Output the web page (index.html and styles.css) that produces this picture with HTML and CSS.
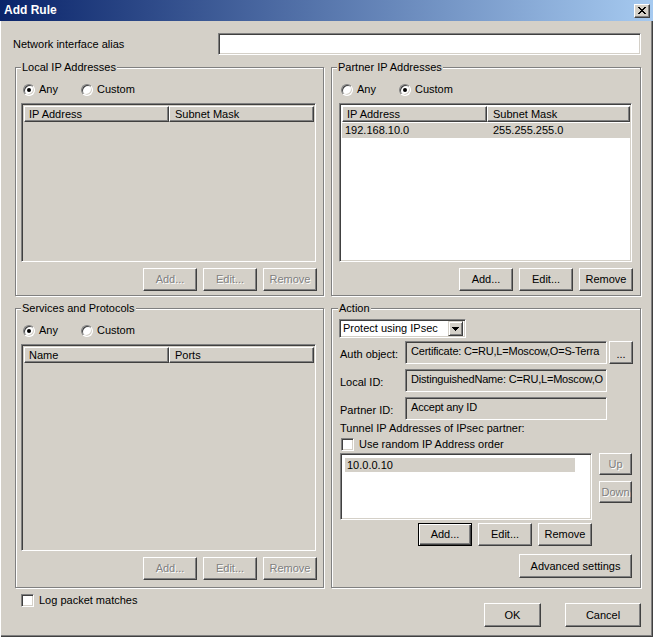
FILE: index.html
```html
<!DOCTYPE html>
<html>
<head>
<meta charset="utf-8">
<title>Add Rule</title>
<link rel="stylesheet" href="styles.css">
</head>
<body>
<div class="window">
  <div class="titlebar">
    <span class="title">Add Rule</span>
    <span class="close-btn"><svg width="8" height="7" viewBox="0 0 8 7" shape-rendering="crispEdges"><path fill="#000" d="M0 0h2v1H0zM6 0h2v1H6zM1 1h2v1H1zM5 1h2v1H5zM2 2h4v1H2zM3 3h2v1H3zM2 4h4v1H2zM1 5h2v1H1zM5 5h2v1H5zM0 6h2v1H0zM6 6h2v1H6z"/></svg></span>
  </div>
  <div class="main">
    <div class="alias-row">
      <span class="alias-label">Network interface alias</span>
      <div class="textbox alias-input"></div>
    </div>

    <div class="groups">
      <fieldset class="group g-left">
        <legend>Local IP Addresses</legend>
        <div class="radio-row">
          <label class="opt"><span class="radio checked"></span>Any</label>
          <label class="opt"><span class="radio"></span>Custom</label>
        </div>
        <div class="listview disabled">
          <div class="lv-header">
            <div class="lv-col lv-c1">IP Address</div>
            <div class="lv-col lv-c2">Subnet Mask</div>
          </div>
          <div class="lv-body"></div>
        </div>
        <div class="btn-row">
          <button class="btn small disabled">Add...</button>
          <button class="btn small disabled">Edit...</button>
          <button class="btn small disabled">Remove</button>
        </div>
      </fieldset>

      <fieldset class="group g-right">
        <legend>Partner IP Addresses</legend>
        <div class="radio-row">
          <label class="opt"><span class="radio"></span>Any</label>
          <label class="opt"><span class="radio checked"></span>Custom</label>
        </div>
        <div class="listview">
          <div class="lv-header">
            <div class="lv-col lv-c1">IP Address</div>
            <div class="lv-col lv-c2">Subnet Mask</div>
          </div>
          <div class="lv-body">
            <div class="lv-row selected"><span class="lv-cell lv-c1">192.168.10.0</span><span class="lv-cell lv-c2">255.255.255.0</span></div>
          </div>
        </div>
        <div class="btn-row">
          <button class="btn small">Add...</button>
          <button class="btn small">Edit...</button>
          <button class="btn small">Remove</button>
        </div>
      </fieldset>

      <fieldset class="group g-left g-services">
        <legend>Services and Protocols</legend>
        <div class="radio-row">
          <label class="opt"><span class="radio checked"></span>Any</label>
          <label class="opt"><span class="radio"></span>Custom</label>
        </div>
        <div class="listview disabled">
          <div class="lv-header">
            <div class="lv-col lv-c1">Name</div>
            <div class="lv-col lv-c2">Ports</div>
          </div>
          <div class="lv-body"></div>
        </div>
        <div class="btn-row">
          <button class="btn small disabled">Add...</button>
          <button class="btn small disabled">Edit...</button>
          <button class="btn small disabled">Remove</button>
        </div>
      </fieldset>

      <fieldset class="group g-action">
        <legend>Action</legend>
        <div class="combo">
          <span class="combo-text">Protect using IPsec</span>
          <span class="combo-btn"><svg width="7" height="4" viewBox="0 0 7 4" shape-rendering="crispEdges"><path fill="#000" d="M0 0h7v1H0zM1 1h5v1H1zM2 2h3v1H2zM3 3h1v1H3z"/></svg></span>
        </div>
        <div class="form">
          <span class="lbl">Auth object:</span>
          <div class="field">Certificate: C=RU,L=Moscow,O=S-Terra</div>
          <button class="btn dots">...</button>
          <span class="lbl">Local ID:</span>
          <div class="field">DistinguishedName: C=RU,L=Moscow,O</div>
          <span></span>
          <span class="lbl">Partner ID:</span>
          <div class="field">Accept any ID</div>
          <span></span>
        </div>
        <div class="tunnel-label">Tunnel IP Addresses of IPsec partner:</div>
        <label class="check-row"><span class="checkbox"></span>Use random IP Address order</label>
        <div class="tunnel">
          <div class="listbox"><div class="lb-item">10.0.0.10</div></div>
          <div class="updown">
            <button class="btn disabled ud">Up</button>
            <button class="btn disabled ud">Down</button>
          </div>
        </div>
        <div class="tunnel-btns">
          <button class="btn small focused">Add...</button>
          <button class="btn small">Edit...</button>
          <button class="btn small">Remove</button>
        </div>
        <div class="adv-row"><button class="btn adv">Advanced settings</button></div>
      </fieldset>
    </div>

    <div class="footer">
      <label class="check-row log"><span class="checkbox"></span>Log packet matches</label>
      <div class="dlg-btns">
        <button class="btn ok">OK</button>
        <button class="btn cancel">Cancel</button>
      </div>
    </div>
  </div>
</div>
</body>
</html>
```

FILE: styles.css
```css
* { box-sizing: border-box; }
html, body { margin: 0; padding: 0; background: #d4d0c8; }
body {
  font-family: "Liberation Sans", Arial, sans-serif;
  font-size: 11px;
  line-height: 13px;
  color: #000;
}

.window {
  width: 653px;
  height: 637px;
  display: flex;
  flex-direction: column;
  background: #d4d0c8;
  overflow: hidden;
}

.titlebar {
  flex: none;
  height: 21px;
  display: flex;
  align-items: center;
  justify-content: space-between;
  padding: 0 3px 0 4px;
  background: linear-gradient(to right, #0a246a, #a6caf0);
  color: #fff;
}
.title { font-weight: bold; font-size: 12px; }
.close-btn {
  width: 16px;
  height: 14px;
  display: flex;
  align-items: center;
  justify-content: center;
  background: #d4d0c8;
  border: 1px solid;
  border-color: #fff #404040 #404040 #fff;
  box-shadow: inset -1px -1px 0 #808080;
}

.main {
  flex: 1;
  padding: 12px 12px 0 13px;
  box-shadow: inset 1px 0 0 #fff, inset -1px -1px 0 #404040, inset -2px -2px 0 #808080;
}

.alias-row { display: flex; align-items: center; }
.alias-label { flex: 1; }

.textbox, .listview, .listbox, .field, .combo, .checkbox {
  border: 1px solid;
  border-color: #808080 #fff #fff #808080;
  box-shadow: inset 1px 1px 0 #404040, inset -1px -1px 0 #d4d0c8;
}
.textbox { background: #fff; }
.alias-input { width: 423px; height: 22px; }

.groups {
  margin: 6px 0 0 2px;
  display: grid;
  grid-template-columns: 309px 310px;
  grid-template-rows: 235px 286px;
  column-gap: 7px;
  row-gap: 6px;
}

.group {
  margin: 0;
  min-width: 0;
  display: flex;
  flex-direction: column;
  border: 1px solid #808080;
  box-shadow: inset 1px 1px 0 #fff, 1px 1px 0 #fff;
}
.group legend {
  padding: 0 1px;
  line-height: 13px;
  background: #d4d0c8;
}
.g-left { padding: 9px 7px 4px 5px; }
.g-services { padding-bottom: 7px; }
.g-right { padding: 9px 8px 4px 7px; }
.g-right legend { margin-left: -2px; }
.g-action { padding: 4px 8px 4px 8px; }
.g-action legend { margin-left: -2px; }

.radio-row { display: flex; height: 13px; align-items: center; padding-left: 2px; }
.opt { display: flex; align-items: center; min-width: 58px; }
.radio {
  width: 12px;
  height: 12px;
  border-radius: 50%;
  margin-right: 4px;
  background: #fff;
  border: 1px solid;
  border-color: #808080 #fff #fff #808080;
  box-shadow: inset 1px 1px 0 #404040, inset -1px -1px 0 #d4d0c8;
  display: flex;
  align-items: center;
  justify-content: center;
}
.radio.checked::after {
  content: "";
  width: 4px;
  height: 4px;
  border-radius: 50%;
  background: #000;
}

.listview {
  flex: 1;
  margin-top: 7px;
  display: flex;
  flex-direction: column;
  background: #fff;
  padding: 2px 1px 1px 2px;
}
.listview.disabled { background: #d4d0c8; }
.lv-header { display: flex; height: 16px; flex: none; }
.lv-col {
  height: 16px;
  padding: 1px 0 0 4px;
  background: #d4d0c8;
  border: 1px solid;
  border-color: #fff #404040 #404040 #fff;
  box-shadow: inset -1px -1px 0 #808080;
  white-space: nowrap;
}
.lv-col.lv-c1 { width: 145px; flex: none; }
.lv-col.lv-c2 { flex: 1; padding-left: 5px; }
.lv-body { flex: 1; }
.lv-row { display: flex; height: 15px; line-height: 15px; margin-top: 1px; }
.lv-row.selected { background: #d4d0c8; }
.lv-cell.lv-c1 { width: 145px; padding-left: 3px; }
.lv-cell.lv-c2 { padding-left: 6px; }

.btn-row {
  display: flex;
  justify-content: flex-end;
  gap: 6px;
  margin-top: 6px;
  margin-right: -1px;
}

.btn {
  font-family: inherit;
  font-size: 11px;
  color: #000;
  height: 23px;
  padding: 0;
  background: #d4d0c8;
  border: 1px solid;
  border-color: #fff #404040 #404040 #fff;
  box-shadow: inset -1px -1px 0 #808080;
  line-height: 13px;
  text-align: center;
}
.btn.small { width: 54px; }
.btn.disabled { color: #808080; text-shadow: 1px 1px 0 #fff; }
.btn.focused {
  border-color: #000;
  box-shadow: inset 1px 1px 0 #fff, inset -1px -1px 0 #404040, inset -2px -2px 0 #808080;
}

.combo {
  width: 127px;
  height: 19px;
  margin-left: -1px;
  background: #fff;
  display: flex;
  align-items: center;
  padding: 2px 2px 2px 3px;
}
.combo-text { flex: 1; }
.combo-btn {
  width: 15px;
  height: 15px;
  display: flex;
  align-items: center;
  justify-content: center;
  background: #d4d0c8;
  border: 1px solid;
  border-color: #d4d0c8 #404040 #404040 #d4d0c8;
  box-shadow: inset 1px 1px 0 #fff, inset -1px -1px 0 #808080;
}

.form {
  margin-top: 3px;
  display: grid;
  grid-template-columns: 63px 202px 24px;
  grid-template-rows: 23px 23px 23px;
  column-gap: 2px;
  row-gap: 5px;
  align-items: center;
}
.lbl { padding-top: 3px; }
.field {
  height: 23px;
  background: #d4d0c8;
  padding: 3px 4px 0 5px;
  white-space: nowrap;
  overflow: hidden;
  letter-spacing: -0.2px;
}
.btn.dots { width: 24px; height: 23px; padding-top: 3px; }

.tunnel-label { margin-top: 2px; }
.check-row { display: flex; align-items: center; height: 13px; margin-top: 3px; }
.checkbox {
  width: 13px;
  height: 13px;
  background: #fff;
  margin-right: 5px;
  flex: none;
}
.g-action .check-row { margin-left: 1px; }

.tunnel { display: flex; gap: 7px; margin-top: 2px; }
.listbox {
  width: 252px;
  height: 67px;
  background: #fff;
  padding: 4px 2px 2px 4px;
}
.lb-item { width: 230px; height: 14px; line-height: 14px; padding-left: 2px; background: #d4d0c8; }
.updown { display: flex; flex-direction: column; gap: 6px; }
.btn.ud { width: 33px; height: 22px; }

.tunnel-btns {
  width: 252px;
  display: flex;
  justify-content: flex-end;
  gap: 6px;
  margin-top: 3px;
}
.adv-row { display: flex; justify-content: flex-end; margin-top: 8px; }
.btn.adv { width: 113px; height: 24px; }

.footer {
  display: flex;
  justify-content: space-between;
  align-items: flex-start;
}
.check-row.log { margin: 6px 0 0 8px; }
.dlg-btns { display: flex; gap: 24px; margin-top: 15px; }
.btn.ok { width: 57px; height: 24px; }
.btn.cancel { width: 76px; height: 24px; }
```
